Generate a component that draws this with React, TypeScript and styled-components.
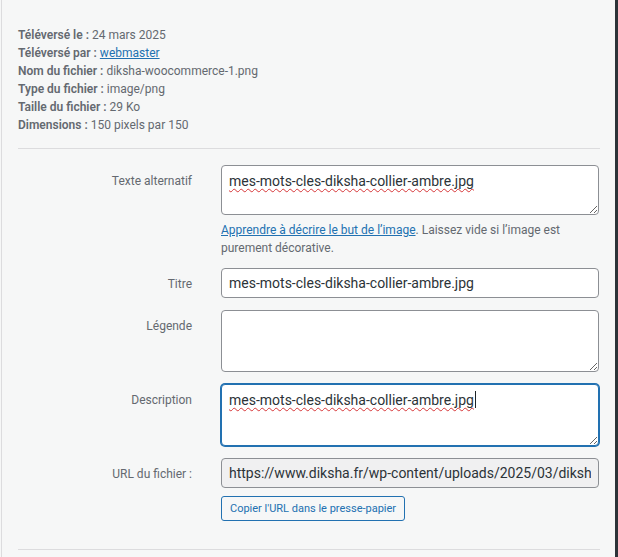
import styled, { createGlobalStyle, css } from 'styled-components'

const FILE_NAME = 'mes-mots-cles-diksha-collier-ambre.jpg'
const FILE_URL =
  'https://www.diksha.fr/wp-content/uploads/2025/03/diksha-woocommerce-1.png'

const details = [
  { label: 'Téléversé le :', value: '24 mars 2025' },
  { label: 'Téléversé par :', value: 'webmaster', link: true },
  { label: 'Nom du fichier :', value: 'diksha-woocommerce-1.png' },
  { label: 'Type du fichier :', value: 'image/png' },
  { label: 'Taille du fichier :', value: '29 Ko' },
  { label: 'Dimensions :', value: '150 pixels par 150' },
]

export default function App() {
  return (
    <>
      <GlobalStyle />
      <Frame>
        <Sidebar>
          <Details>
            {details.map((item) => (
              <DetailLine key={item.label}>
                <strong>{item.label}</strong>{' '}
                {item.link ? <a href="#">{item.value}</a> : item.value}
              </DetailLine>
            ))}
          </Details>

          <Divider />

          <Settings>
            <Setting $gap={11}>
              <Label>Texte alternatif</Label>
              <FieldColumn>
                <FieldWrap>
                  <TextArea
                    $height={50}
                    defaultValue={FILE_NAME}
                    spellCheck={false}
                  />
                  <Spelling aria-hidden="true">
                    <Misspelled>{FILE_NAME}</Misspelled>
                  </Spelling>
                </FieldWrap>
                <Help>
                  <a href="#">Apprendre à décrire le but de l’image</a>.
                  Laissez vide si l’image est purement décorative.
                </Help>
              </FieldColumn>
            </Setting>

            <Setting>
              <Label>Titre</Label>
              <TextInput defaultValue={FILE_NAME} spellCheck={false} />
            </Setting>

            <Setting>
              <Label>Légende</Label>
              <TextArea $height={62} defaultValue="" />
            </Setting>

            <Setting>
              <Label>Description</Label>
              <FieldWrap>
                <TextArea
                  $height={62}
                  $focused
                  defaultValue={FILE_NAME}
                  spellCheck={false}
                />
                <Spelling aria-hidden="true">
                  <Misspelled>{FILE_NAME}</Misspelled>
                  <Caret />
                </Spelling>
              </FieldWrap>
            </Setting>

            <Setting $gap={8}>
              <Label>URL du fichier :</Label>
              <TextInput readOnly $readOnly defaultValue={FILE_URL} />
            </Setting>

            <Setting $gap={14}>
              <span />
              <div>
                <CopyButton type="button">
                  Copier l'URL dans le presse-papier
                </CopyButton>
              </div>
            </Setting>
          </Settings>

          <Divider />
        </Sidebar>
        <Edge />
      </Frame>
    </>
  )
}

const GlobalStyle = createGlobalStyle`
  html, body {
    margin: 0;
    padding: 0;
    background: #f6f7f7;
  }
  body {
    font-family: Roboto, "Liberation Sans", sans-serif;
    color: #646970;
  }
  * {
    box-sizing: border-box;
  }
`

const Frame = styled.div`
  display: flex;
  width: 618px;
  height: 557px;
  overflow: hidden;
  background: #f6f7f7;
`

const Sidebar = styled.div`
  flex: 1;
  min-width: 0;
  margin-left: 1px;
  padding: 26px 15px 0 16px;
  border-left: 1px solid #dcdcde;
`

const Edge = styled.div`
  width: 3px;
  flex: none;
  background: #2c3338;
`

const Details = styled.div`
  display: flex;
  flex-direction: column;
  font-size: 12px;
  line-height: 18px;
`

const DetailLine = styled.div`
  color: #646970;

  strong {
    font-weight: 600;
  }

  a {
    color: #2271b1;
    text-decoration: underline;
  }
`

const Divider = styled.hr`
  margin: 14px 0 16px;
  border: 0;
  border-top: 1px solid #dcdcde;
`

const Settings = styled.div`
  display: flex;
  flex-direction: column;
`

const Setting = styled.div<{ $gap?: number }>`
  display: grid;
  grid-template-columns: 174px 378px;
  column-gap: 29px;
  align-items: start;
  margin-bottom: ${({ $gap }) => $gap ?? 12}px;
`

const Label = styled.label`
  padding-top: 7px;
  font-size: 12px;
  line-height: 18px;
  text-align: right;
  color: #646970;
`

const FieldColumn = styled.div`
  display: flex;
  flex-direction: column;
  gap: 6px;
`

const FieldWrap = styled.div`
  position: relative;
  display: flex;
`

const fieldBase = css`
  width: 100%;
  margin: 0;
  border: 1px solid #8c8f94;
  border-radius: 4px;
  background: #fff;
  color: #2c3338;
  font-family: Roboto, "Liberation Sans", sans-serif;
  font-size: 14px;
  outline: none;
`

const TextArea = styled.textarea<{ $height: number; $focused?: boolean }>`
  ${fieldBase};
  display: block;
  height: ${({ $height }) => $height}px;
  padding: 5px 7px;
  line-height: 20px;
  resize: vertical;

  ${({ $focused }) =>
    $focused &&
    css`
      border-color: #2271b1;
      box-shadow: 0 0 0 1px #2271b1;
    `}
`

const TextInput = styled.input<{ $readOnly?: boolean }>`
  ${fieldBase};
  height: 30px;
  padding: 0 7px;
  line-height: 28px;
  background: ${({ $readOnly }) => ($readOnly ? '#f0f0f1' : '#fff')};
`

const Spelling = styled.div`
  position: absolute;
  inset: 0;
  padding: 6px 8px;
  font-size: 14px;
  line-height: 20px;
  color: transparent;
  pointer-events: none;
  white-space: pre;
  overflow: hidden;
`

const Misspelled = styled.span`
  text-decoration: underline wavy #d63638;
  text-decoration-thickness: 1px;
  text-underline-offset: 2px;
  text-decoration-skip-ink: none;
`

const Caret = styled.span`
  display: inline-block;
  width: 1px;
  height: 17px;
  margin-left: 1px;
  vertical-align: -3px;
  background: #1d2327;
`

const Help = styled.p`
  margin: 0;
  font-size: 12px;
  line-height: 18px;
  color: #646970;

  a {
    color: #2271b1;
    text-decoration: underline;
  }
`

const CopyButton = styled.button`
  height: 25px;
  padding: 0 8px;
  border: 1px solid #2271b1;
  border-radius: 3px;
  background: #f6f7f7;
  color: #2271b1;
  font-family: Roboto, "Liberation Sans", sans-serif;
  font-size: 11px;
  line-height: 23px;
  cursor: pointer;
`
